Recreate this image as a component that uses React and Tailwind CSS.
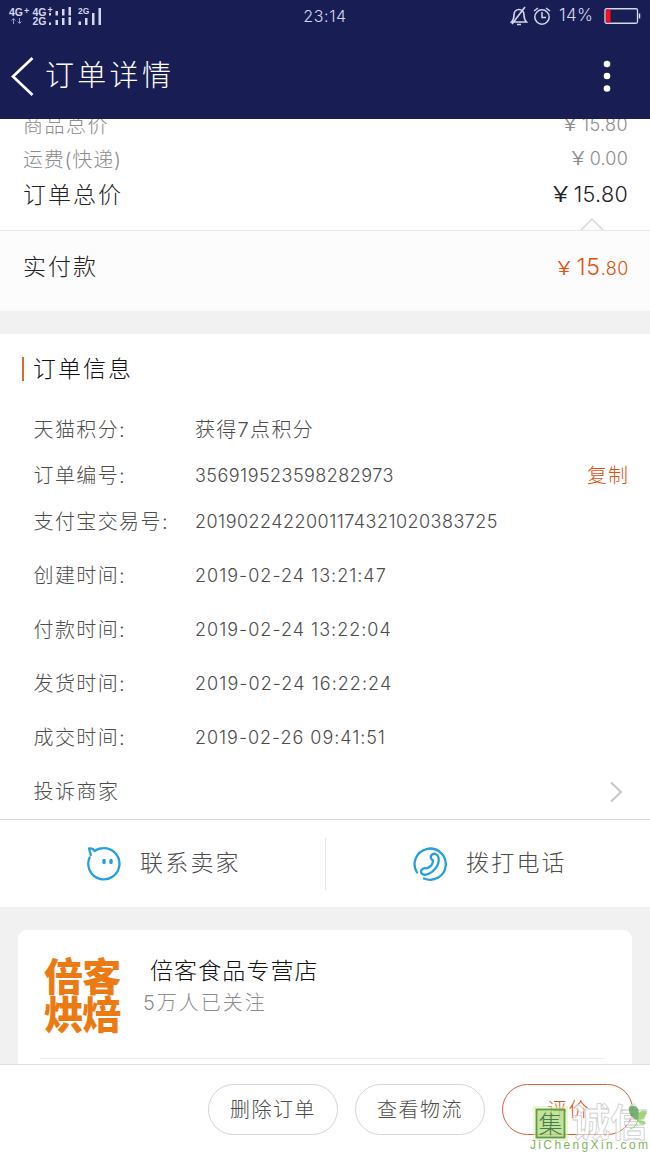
import React from "react";

const infoRows = [
  { label: "天猫积分:", value: "获得7点积分", height: "h-[46px]", track: "text-[20px] tracking-[1.3px]" },
  { label: "订单编号:", value: "356919523598282973", copy: true, height: "h-[46px]", track: "text-[18px] tracking-[0.46px]" },
  { label: "支付宝交易号:", value: "2019022422001174321020383725", height: "h-[46px]", track: "text-[18px] tracking-[0.46px]" },
  { label: "创建时间:", value: "2019-02-24 13:21:47", height: "h-[62px]", track: "text-[18px] tracking-[1px]" },
  { label: "付款时间:", value: "2019-02-24 13:22:04", height: "h-[46px]", track: "text-[18px] tracking-[1px]" },
  { label: "发货时间:", value: "2019-02-24 16:22:24", height: "h-[62px]", track: "text-[18px] tracking-[1.05px]" },
  { label: "成交时间:", value: "2019-02-26 09:41:51", height: "h-[46px]", track: "text-[18px] tracking-[0.95px]" },
];

function Yen() {
  return <span className="mr-[5px] inline-block origin-right scale-x-[1.35]">¥</span>;
}

function StatusBar() {
  return (
    <div className="flex h-8 items-center text-[#d5d7ea]">
      <div className="flex-1">
        <svg width="110" height="32" viewBox="0 0 110 32" fill="currentColor" fontFamily="Liberation Sans" fontWeight="bold">
          <text x="9" y="16" fontSize="10.500">4G</text>
          <text x="24" y="14" fontSize="9">+</text>
          <text x="32.500" y="15.500" fontSize="10.500">4G</text>
          <text x="47.500" y="13" fontSize="9">+</text>
          <text x="32.500" y="25" fontSize="10.500">2G</text>
          <text x="78" y="14" fontSize="8.500">2G</text>
          <path d="M13.500 24v-5M11.500 20.500l2-2 2 2M19.500 18v5M17.500 21.500l2 2 2-2" stroke="#9699bd" fill="none" />
          <path d="M49 13h2v2.500h-2zM55.500 11h2.500v4.500h-2.500zM62 9h2.500v6.500H62zM68.500 7h2.500v8.500h-2.500zM49 22.500h2V25h-2zM55.500 20h2.500v5h-2.500zM62 18h2.500v7H62zM68.500 17h2.500v8h-2.500zM78.500 21.500H81V25h-2.500zM85 18h2.500v7H85zM92 13h2.500v12H92zM98.500 8h2.500v17h-2.500z" />
        </svg>
      </div>
      <span className="shrink-0 pl-[9px] text-center text-[16px] font-light tracking-[0.6px]">23:14</span>
      <div className="flex flex-1 items-center justify-end pr-[9px]">
        <svg width="18" height="20" viewBox="0 0 18 20" fill="none" stroke="currentColor" strokeWidth="1.600">
          <path d="M1.500 16c2-2 2.500-4 2.500-7 0-3 2-5.500 5-5.500s5 2.500 5 5.500c0 3 .5 5 2.500 7zM7 18.500h4M2 18L15 1" />
        </svg>
        <svg className="ml-[5px]" width="18" height="20" viewBox="0 0 18 20" fill="none" stroke="currentColor" strokeWidth="1.500">
          <circle cx="9" cy="11" r="7.200" />
          <path d="M9 6v5.500h4M1 5l4-3M17 5l-4-3" />
        </svg>
        <span className="ml-2 w-[37px] text-[17px] font-light tracking-[0.3px] whitespace-nowrap">14%</span>
        <svg className="ml-2" width="37" height="18" viewBox="0 0 37 18" fill="none">
          <rect x="1" y="1.750" width="32.500" height="14.500" rx="1.500" stroke="currentColor" strokeWidth="1.300" />
          <path d="M2 2.500h4.500v13H2z" fill="#fb0d1b" />
          <path d="M35.500 6.500v5" stroke="currentColor" strokeWidth="1.500" />
        </svg>
      </div>
    </div>
  );
}

function Watermark() {
  return (
    <svg className="pointer-events-none absolute right-0 bottom-0" width="122" height="52" viewBox="0 0 122 52">
      <rect x="5" y="3" width="35" height="35" fill="#d9efa0" opacity=".5" />
      <rect x="8.500" y="6.500" width="28" height="28" fill="#a6d676" fillOpacity=".6" stroke="#5f9a50" strokeWidth="1.800" />
      <text x="10.500" y="30" fontFamily="Noto Sans CJK SC" fontSize="24" fill="#4a7c4b">集</text>
      <text x="44" y="33" fontFamily="Noto Sans CJK SC" fontSize="38" fontWeight="bold" fill="#fff" fillOpacity=".6" stroke="#cccccc" strokeWidth=".8">诚信</text>
      <path d="M101 4c7-4 12 2 9 13-6-1-10-6-9-13z" fill="#5c9e5b" opacity=".8" />
      <path d="M110 16c-1-7 3-9 8-8 1 6-3 10-8 8zM110 17c4 0 7 1 8 4-4 1-8 0-8-4z" fill="#8fcf5d" opacity=".8" />
      <path d="M110 16c-1 6-4 9-8 10" stroke="#8fcf5d" fill="none" />
      <text x="2" y="46" fontFamily="Liberation Sans" fontSize="12" textLength="118" fill="#7fb45c">JiChengXin.com</text>
    </svg>
  );
}

export default function App() {
  return (
    <div className="relative flex h-[1155px] w-[650px] flex-col overflow-hidden bg-white font-['Inter','Noto_Sans_CJK_SC',sans-serif] font-light text-[#4c4c4c]">
      <header className="h-[119px] shrink-0 bg-[#181d54] text-white">
        <StatusBar />
        <div className="flex h-[87px] items-center pl-[11px]">
          <svg width="24" height="40" viewBox="0 0 24 40" fill="none" stroke="currentColor" strokeWidth="2.700">
            <path d="M21.500 2L2 20.500 21.500 39" />
          </svg>
          <h1 className="ml-[10px] text-[29px] leading-none tracking-[3.3px]">订单详情</h1>
          <svg className="mr-[39px] ml-auto" width="8" height="34" viewBox="0 0 8 34" fill="currentColor">
            <circle cx="4" cy="5" r="3.300" />
            <circle cx="4" cy="17" r="3.300" />
            <circle cx="4" cy="29.500" r="3.300" />
          </svg>
        </div>
      </header>

      <section className="relative h-[112px] shrink-0 overflow-hidden border-b border-[#e8e8e8] pr-[22px] pl-[23px]">
        <div className="-mt-[10px] flex h-[33px] items-center justify-between text-[20px] text-[#8c8c8c]">
          <span className="tracking-[1.5px]">商品总价</span>
          <span className="-mt-[2px] text-[18px] tracking-[0.4px]"><Yen />15.80</span>
        </div>
        <div className="flex h-[34px] items-center justify-between text-[20px] text-[#8c8c8c]">
          <span className="pt-px tracking-[0.8px]">运费(快递)</span>
          <span className="-mt-[2px] text-[18px] tracking-[0.2px]"><Yen />0.00</span>
        </div>
        <div className="flex h-[38px] items-center justify-between text-[23px] text-[#222]">
          <span className="pt-px tracking-[2px]">订单总价</span>
          <span className="-mt-[2px] text-[21.5px] tracking-[0.3px]"><Yen />15.80</span>
        </div>
        <svg className="absolute right-[46px] bottom-0" width="24" height="12" viewBox="0 0 24 12" fill="#fcfcfc" stroke="#dedede" strokeWidth="1.800">
          <path d="M1 12L12 1l11 11" />
        </svg>
      </section>

      <section className="flex h-20 shrink-0 items-center justify-between bg-[#fcfcfc] pr-[21px] pb-2 pl-[23px]">
        <span className="text-[23px] tracking-[2px] text-[#222]">实付款</span>
        <span className="text-[18px] tracking-[0.5px] text-[#e0500f]">
          <Yen /><span className="text-[23px] tracking-[0.8px]">15</span>.80
        </span>
      </section>

      <div className="h-[23px] shrink-0 bg-[#f1f1f1]" />

      <section className="flex h-[486px] shrink-0 flex-col border-b border-[#d9d9d9] pr-[21px] pl-[22px]">
        <div className="mt-4 flex h-10 items-center">
          <i className="mt-[2px] h-6 w-[2px] bg-[#dd6a2c]" />
          <h2 className="ml-[9px] pt-[2px] text-[23px] tracking-[2px] text-[#111]">订单信息</h2>
        </div>
        <div className="mt-5 pl-[11.5px]">
          {infoRows.map((row) => (
            <div key={row.label} className={`flex items-center ${row.height}`}>
              <span className="w-[161.5px] shrink-0 text-[20px] tracking-[1.4px] whitespace-nowrap">{row.label}</span>
              <span className={`whitespace-nowrap ${row.track}`}>{row.value}</span>
              {row.copy && <span className="ml-auto text-[20px] tracking-[1px] text-[#e0500f]">复制</span>}
            </div>
          ))}
          <div className="flex h-[62px] items-center justify-between pr-[6px]">
            <span className="text-[20px] tracking-[1.5px]">投诉商家</span>
            <svg width="14" height="22" viewBox="0 0 14 22" fill="none" stroke="#c9c9c9" strokeWidth="2.200">
              <path d="M2 1.500L12 11 2 20.500" />
            </svg>
          </div>
        </div>
      </section>

      <section className="flex h-[87px] shrink-0 items-center text-[23px] tracking-[2.2px]">
        <div className="flex h-[52px] w-[326px] items-center border-r border-[#e4e4e4] pl-[85px]">
          <svg width="36" height="36" viewBox="0 0 36 36" fill="none" stroke="#249fdf" strokeWidth="2.300" strokeLinecap="round" strokeLinejoin="round">
            <path d="M5.800 9L4 2.500c3-.3 4.500.5 5.500 2.600C12 3.200 15 2.200 18.500 2.200A15.600 15.600 0 1 1 4.600 11.500" />
            <path d="M19 14.500v2M26 14.500v2" strokeWidth="3.400" />
          </svg>
          <span className="ml-[19px]">联系卖家</span>
        </div>
        <div className="flex items-center pl-[85.5px]">
          <svg width="36" height="36" viewBox="0 0 36 36" fill="none" stroke="#249fdf" strokeWidth="2.300" strokeLinecap="round" strokeLinejoin="round">
            <path d="M5 26.500A15.600 15.600 0 1 1 12 32.500" />
            <path d="M19.500 9c2.500-2.500 6-1 7 2.500 1.500 7-4.500 15-12 17-3 .8-5.500-.5-5.500-3 0-2.500 3-4 6-3.200 3.500-1.500 6-4.500 6-7.800-2-1.500-2.700-3.800-1.500-5.500z" />
          </svg>
          <span className="ml-[18.5px]">拨打电话</span>
        </div>
      </section>

      <section className="h-[157px] shrink-0 bg-[#f1f1f1] px-[18px] pt-[23px]">
        <div className="flex h-[134px] flex-col rounded-t-[9px] bg-white pr-7 pl-[22px]">
          <div className="flex h-[129px] shrink-0 border-b border-[#ededed]">
            <div className="ml-1 w-[82px] pt-[25px] font-['Noto_Sans_CJK_SC'] text-[39px] leading-[38px] font-black tracking-[-0.7px] text-[#ec7a13]">
              <div>倍客</div>
              <div>烘焙</div>
            </div>
            <div className="ml-[17px] pt-[25px]">
              <div className="ml-[7px] text-[23px] leading-8 tracking-[1.1px] text-[#111]">倍客食品专营店</div>
              <div className="text-[20px] leading-8 tracking-[2px] text-[#8c8c8c]">5万人已关注</div>
            </div>
          </div>
        </div>
      </section>

      <footer className="flex h-[91px] shrink-0 justify-end gap-[17px] border-t border-[#e0e0e0] pt-[19px] pr-[17px] text-[20px] tracking-[1.5px]">
        <button className="h-[51px] w-[130px] rounded-full border border-[#d5d5d5]">删除订单</button>
        <button className="h-[51px] w-[130px] rounded-full border border-[#d5d5d5]">查看物流</button>
        <button className="h-[51px] w-[131px] rounded-full border border-[#d2623a] pl-[2px] text-[#d9531e]">评价</button>
      </footer>
      <Watermark />
    </div>
  );
}
